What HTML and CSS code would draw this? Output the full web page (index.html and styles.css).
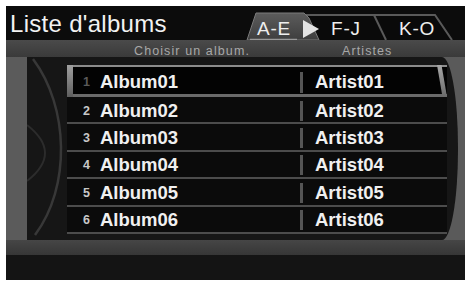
FILE: index.html
```html
<!DOCTYPE html>
<html lang="fr">
<head>
<meta charset="utf-8">
<title>Liste d'albums</title>
<link rel="stylesheet" href="styles.css">
</head>
<body>
<div class="screen">
  <header class="titlebar">
    <h1 class="title">Liste d'albums</h1>
    <svg class="tabs" width="220" height="34" viewBox="0 0 220 34">
      <defs>
        <linearGradient id="tabg" x1="0" y1="0" x2="0" y2="1">
          <stop offset="0" stop-color="#5c5c5c"/>
          <stop offset="1" stop-color="#3e3e3e"/>
        </linearGradient>
      </defs>
      <polygon points="62,34 64,9 129,9 141,34" fill="#0a0a0a"/>
      <polygon points="141,34 129,9 190,9 207,34" fill="#0a0a0a"/>
      <polyline points="60,9 190,9 207,34" fill="none" stroke="#5a5a5a" stroke-width="2"/>
      <line x1="129" y1="9" x2="141" y2="34" stroke="#5a5a5a" stroke-width="2"/>
      <polygon points="2,34 11,7 59,7 64,12 74,34" fill="url(#tabg)" stroke="#7a7a7a" stroke-width="1"/>
      <line x1="5" y1="33.5" x2="52" y2="33.5" stroke="#9a9a9a" stroke-width="1.5"/>
      <text x="29" y="29" class="tab-text" text-anchor="middle">A-E</text>
      <polygon points="58,14 58,32 74,23" fill="#e4e4e4"/>
      <text x="101" y="29" class="tab-text" text-anchor="middle">F-J</text>
      <text x="172" y="29" class="tab-text" text-anchor="middle">K-O</text>
    </svg>
  </header>
  <div class="subheader">
    <span class="sub-album">Choisir un album.</span>
    <span class="sub-artist">Artistes</span>
  </div>
  <div class="main">
    <div class="frame-left"></div>
    <div class="center">
      <svg class="deco" width="60" height="183" viewBox="0 0 60 183">
        <path d="M6 2 C42 50 44 130 8 178" fill="none" stroke="#383838" stroke-width="2.5"/>
        <path d="M0 68 Q36 96 0 124" fill="none" stroke="#2c2c2c" stroke-width="2"/>
      </svg>
      <ul class="rows">
        <li class="row selected"><span class="num">1</span><span class="album">Album01</span><span class="divider"></span><span class="artist">Artist01</span></li>
        <li class="row"><span class="num">2</span><span class="album">Album02</span><span class="divider"></span><span class="artist">Artist02</span></li>
        <li class="row"><span class="num">3</span><span class="album">Album03</span><span class="divider"></span><span class="artist">Artist03</span></li>
        <li class="row"><span class="num">4</span><span class="album">Album04</span><span class="divider"></span><span class="artist">Artist04</span></li>
        <li class="row"><span class="num">5</span><span class="album">Album05</span><span class="divider"></span><span class="artist">Artist05</span></li>
        <li class="row"><span class="num">6</span><span class="album">Album06</span><span class="divider"></span><span class="artist">Artist06</span></li>
      </ul>
    </div>
  </div>
  <div class="band"></div>
  <div class="footer"></div>
</div>
</body>
</html>
```
FILE: styles.css
```css
html, body {
  margin: 0;
  padding: 0;
  background: #ffffff;
}
body {
  width: 465px;
  height: 282px;
  overflow: hidden;
  font-family: "Liberation Sans", Arial, sans-serif;
}
.screen {
  margin: 6px 0 0 6px;
  width: 459px;
  height: 274px;
  background: #121212;
  display: flex;
  flex-direction: column;
}
.titlebar {
  height: 34px;
  flex: none;
  display: flex;
  align-items: flex-start;
  background: #0c0c0c;
}
.title {
  margin: 0;
  padding-left: 4px;
  font-size: 24px;
  font-weight: normal;
  line-height: 36px;
  letter-spacing: 0.3px;
  color: #f2f2f2;
  white-space: nowrap;
}
.tabs {
  margin-left: auto;
  display: block;
}
.tab-text {
  font-family: "Liberation Sans", Arial, sans-serif;
  font-size: 19px;
  fill: #eeeeee;
  letter-spacing: 0.8px;
}
.subheader {
  height: 17px;
  flex: none;
  box-sizing: border-box;
  padding: 4px 0 0 128px;
  display: flex;
  background: linear-gradient(#4a4a4a, #3a3a3a);
  font-size: 12.5px;
  line-height: 14px;
  letter-spacing: 1.1px;
  color: #a8a8a8;
  white-space: nowrap;
}
.sub-album {
  width: 208px;
}
.main {
  height: 183px;
  flex: none;
  display: flex;
  background: #5a5a5a;
}
.frame-left {
  width: 21px;
  flex: none;
  background: #5b5b5b;
}
.center {
  flex: 1;
  margin-right: 7px;
  position: relative;
  background: #161616;
  border-radius: 0 16px 16px 0 / 0 90px 90px 0;
}
.deco {
  position: absolute;
  left: 0;
  top: 0;
}
.rows {
  position: relative;
  list-style: none;
  margin: 0 0 0 40px;
  padding: 8px 0 0 0;
  width: 380px;
}
.row {
  position: relative;
  box-sizing: border-box;
  height: 27.4px;
  padding-top: 2px;
  display: grid;
  grid-template-columns: 33px 200px 3px 1fr;
  align-items: center;
  background: #0b0b0b;
  border-bottom: 2px solid #4c4c4c;
}
.row.selected {
  height: 32px;
  padding-top: 3px;
  background: #030303;
  border-top: 2px solid #8c8c8c;
  border-bottom: 3px solid #6a6a6a;
}
.row.selected::before {
  content: "";
  position: absolute;
  left: 0;
  top: -2px;
  bottom: -3px;
  width: 6px;
  background: linear-gradient(#a0a0a0, #5e5e5e);
}
.row.selected::after {
  content: "";
  position: absolute;
  right: 0;
  top: -2px;
  bottom: -3px;
  width: 10px;
  background: linear-gradient(#a8a8a8, #6a6a6a);
  clip-path: polygon(0 0, 45% 0, 100% 100%, 55% 100%);
}
.num {
  padding-left: 16px;
  font-size: 12.5px;
  font-weight: bold;
  color: #c8c8c8;
  line-height: 14px;
}
.row.selected .num {
  color: #5a5a5a;
}
.album,
.artist {
  font-size: 18.5px;
  font-weight: bold;
  line-height: 22px;
  color: #f0f0f0;
  white-space: nowrap;
}
.divider {
  height: 20px;
  background: #555555;
}
.row.selected .divider {
  height: 21px;
}
.artist {
  padding-left: 12px;
}
.band {
  height: 15px;
  flex: none;
  background: linear-gradient(#464646, #363636);
}
.footer {
  height: 25px;
  flex: none;
  background: #141414;
}
```
